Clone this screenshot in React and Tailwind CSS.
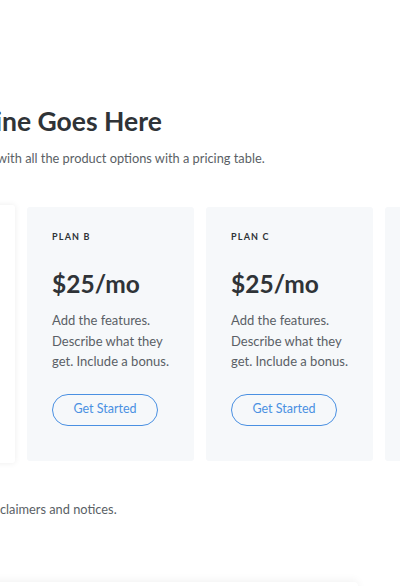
import React from "react";

function Card({ label }) {
  return (
    <div className="w-[167px] h-[254px] shrink-0 bg-[#f6f8fa] rounded-[3px] pl-[25px] pr-3 pt-[24px] flex flex-col">
      <div className="text-[9px] leading-[12px] font-bold tracking-[1.2px] text-[#2f3337]">{label}</div>
      <div className="mt-[26px] text-[24.5px] leading-[30px] font-bold text-[#2f3337]">$25/mo</div>
      <p className="mt-[11px] text-[13px] leading-[20.5px] text-[#5a5f66]">
        Add the features. Describe what they get. Include a bonus.
      </p>
      <button className="mt-[22px] w-[106px] h-[32px] rounded-full border-[1.5px] border-[#4a90e2] text-[12.5px] text-[#4a90e2] bg-transparent">
        Get Started
      </button>
    </div>
  );
}

export default function App() {
  return (
    <div className="w-[400px] h-[586px] overflow-hidden bg-white relative" style={{ fontFamily: "Lato, 'Open Sans', sans-serif" }}>
      <div className="pt-[104px]">
        <h1 className="-ml-[74px] whitespace-nowrap text-[26.5px] leading-[34px] font-bold text-[#2f3337]">Headline Goes Here</h1>
        <p className="mt-[10px] -ml-[3px] whitespace-nowrap text-[12.8px] leading-[20px] text-[#5a5f66]">
          with all the product options with a pricing table.
        </p>
        <div className="mt-[39px] -ml-[152px] flex gap-3 w-[800px]">
          <div className="w-[167px] h-[258px] -mt-[2px] shrink-0 bg-white rounded-[3px] shadow-[0_0_6px_rgba(0,0,0,0.08)]"></div>
          <Card label="PLAN B" />
          <Card label="PLAN C" />
          <div className="w-[167px] h-[254px] shrink-0 bg-[#f6f8fa] rounded-[3px]"></div>
        </div>
        <p className="mt-[36px] -ml-[48px] whitespace-nowrap text-[12.8px] leading-[20px] text-[#5a5f66]">
          Legal disclaimers and notices.
        </p>
      </div>
      <div className="absolute left-[-20px] top-[582px] w-[378px] h-[40px] bg-white rounded-[4px] shadow-[0_-2px_8px_rgba(0,0,0,0.05)]"></div>
    </div>
  );
}
